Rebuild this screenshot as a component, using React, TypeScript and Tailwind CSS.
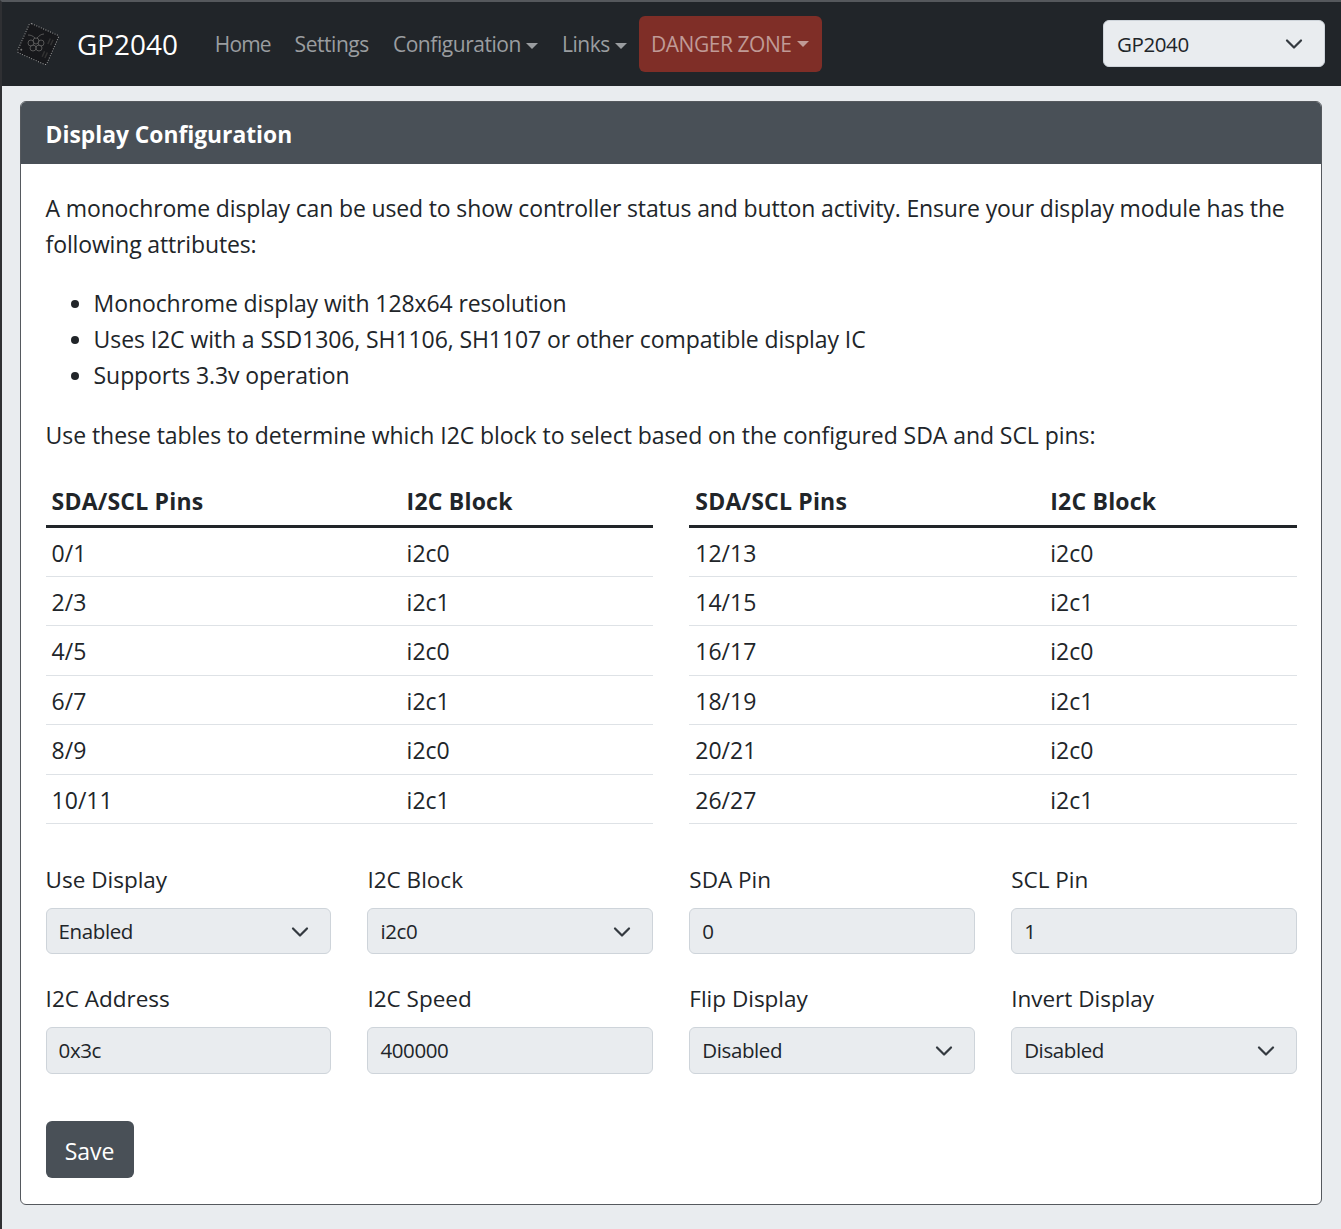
import React from 'react';
import { ChevronDown } from 'lucide-react';

const leftPins = [
  ['0/1', 'i2c0'],
  ['2/3', 'i2c1'],
  ['4/5', 'i2c0'],
  ['6/7', 'i2c1'],
  ['8/9', 'i2c0'],
  ['10/11', 'i2c1'],
];

const rightPins = [
  ['12/13', 'i2c0'],
  ['14/15', 'i2c1'],
  ['16/17', 'i2c0'],
  ['18/19', 'i2c1'],
  ['20/21', 'i2c0'],
  ['26/27', 'i2c1'],
];

const Logo = () => (
  <svg viewBox="0 0 48 48" className="h-[48px] w-[48px] shrink-0">
    <g transform="rotate(24 24 24)">
      <rect x="8" y="8" width="32" height="32" rx="2" fill="#17181b" stroke="#9a9a9a" strokeWidth="1" strokeDasharray="1 1.5" />
      <circle cx="11" cy="36" r="1" fill="#777" />
    </g>
    <g fill="none" stroke="#565656" strokeWidth="1">
      <circle cx="22" cy="21" r="3" />
      <circle cx="17" cy="23" r="3" />
      <circle cx="27" cy="23" r="3" />
      <circle cx="19" cy="28" r="3" />
      <circle cx="25" cy="28" r="3" />
      <path d="M14 15c3 0 5 1 7 3M30 14c-3 0-5 2-7 4" />
    </g>
    <g transform="rotate(24 24 24)" stroke="#333" strokeWidth="1.5">
      <path d="M33 14v6M36 14v6M33 28v6M36 28v6" />
    </g>
  </svg>
);

const Caret = () => (
  <span className="ml-[5px] inline-block h-0 w-0 border-x-[6.5px] border-t-[6.5px] border-x-transparent border-t-current align-middle" />
);

const PinTable = ({ rows }: { rows: string[][] }) => (
  <table className="w-full table-fixed border-collapse">
    <thead>
      <tr className="h-[46px] border-b-[3px] border-[#212529] text-left tracking-[0.2px]">
        <th className="w-[355px] px-[6px] pb-[4px] font-bold">SDA/SCL Pins</th>
        <th className="px-[6px] pb-[4px] font-bold">I2C Block</th>
      </tr>
    </thead>
    <tbody>
      {rows.map((row) => (
        <tr key={row[0]} className="h-[49.5px] border-b border-[#dee2e6]">
          <td className="px-[6px] pt-[2px]">{row[0]}</td>
          <td className="px-[6px] pt-[2px]">{row[1]}</td>
        </tr>
      ))}
    </tbody>
  </table>
);

const SelectField = ({ label, value }: { label: string; value: string }) => (
  <div>
    <label className="mb-[10px] block text-[22.5px] leading-[36px]">{label}</label>
    <div className="relative">
      <select
        defaultValue={value}
        className="h-[46.5px] w-full appearance-none rounded-[6px] border border-[#ced4da] bg-[#e9ecef] px-[12px] text-[20.5px] tracking-[-0.4px] text-[#212529]"
      >
        <option>{value}</option>
      </select>
      <ChevronDown size={28} strokeWidth={1.9} className="pointer-events-none absolute right-[17px] top-[10px] text-[#343a40]" />
    </div>
  </div>
);

const InputField = ({ label, value }: { label: string; value: string }) => (
  <div>
    <label className="mb-[10px] block text-[22.5px] leading-[36px]">{label}</label>
    <input
      readOnly
      value={value}
      className="h-[46.5px] w-full rounded-[6px] border border-[#ced4da] bg-[#e9ecef] px-[12px] text-[20.5px] tracking-[-0.4px] text-[#212529]"
    />
  </div>
);

export default function App() {
  return (
    <div className="min-h-[1229px] border-t-2 border-l-2 border-t-[#55585c] border-l-[#2f3033] bg-[#e9ecef] font-['Open_Sans',sans-serif] text-[23px] leading-[36px] text-[#212529]">
      <nav className="flex h-[84px] items-center bg-[#212529] pl-[12px] pr-[16px]">
        <Logo />
        <span className="ml-[15px] text-[27.9px] text-white">GP2040</span>
        <div className="ml-[25px] flex items-center text-[21px] tracking-[-0.45px] text-[#9a9da0]">
          <a className="px-[12px] tracking-[-0.9px]">Home</a>
          <a className="px-[12px]">Settings</a>
          <a className="px-[12px]">
            Configuration
            <Caret />
          </a>
          <a className="px-[12px]">
            Links
            <Caret />
          </a>
          <a className="flex h-[56px] items-center rounded-[6px] bg-[#7f2e27] pl-[12px] pr-[13px] text-[#c09a96]">
            DANGER ZONE
            <Caret />
          </a>
        </div>
        <div className="relative mb-[1px] ml-auto w-[222px]">
          <select
            defaultValue="GP2040"
            className="h-[47px] w-full appearance-none rounded-[6px] border border-[#ced4da] bg-[#e9ecef] px-[13px] text-[20.5px] tracking-[-0.4px] text-[#212529]"
          >
            <option>GP2040</option>
          </select>
          <ChevronDown size={28} strokeWidth={1.9} className="pointer-events-none absolute right-[17px] top-[10px] text-[#343a40]" />
        </div>
      </nav>

      <main className="pl-[18px] pr-[19px] pt-[15px] pb-[25px]">
        <section className="overflow-hidden rounded-[6px] border border-[#55595e] bg-white">
          <h1 className="flex h-[62px] items-center bg-[#495057] pl-[24.6px] pr-[24px] pt-[4px] text-[22.8px] font-bold text-white">Display Configuration</h1>
          <div className="pl-[24.6px] pr-[24px] pt-[26px] pb-[26px]">
            <p className="tracking-[-0.145px]">
              A monochrome display can be used to show controller status and button activity. Ensure your display module has the following attributes:
            </p>
            <ul className="mt-[23px] list-disc pl-[48px] tracking-[-0.09px]">
              <li>Monochrome display with 128x64 resolution</li>
              <li>Uses I2C with a SSD1306, SH1106, SH1107 or other compatible display IC</li>
              <li>Supports 3.3v operation</li>
            </ul>
            <p className="mt-[24px] tracking-[-0.06px]">Use these tables to determine which I2C block to select based on the configured SDA and SCL pins:</p>

            <div className="mt-[27.5px] grid grid-cols-2 gap-x-[36px]">
              <PinTable rows={leftPins} />
              <PinTable rows={rightPins} />
            </div>

            <div className="mt-[37.5px] grid grid-cols-4 gap-x-[36px] gap-y-[27px]">
              <SelectField label="Use Display" value="Enabled" />
              <SelectField label="I2C Block" value="i2c0" />
              <InputField label="SDA Pin" value="0" />
              <InputField label="SCL Pin" value="1" />
              <InputField label="I2C Address" value="0x3c" />
              <InputField label="I2C Speed" value="400000" />
              <SelectField label="Flip Display" value="Disabled" />
              <SelectField label="Invert Display" value="Disabled" />
            </div>

            <button className="mt-[47px] h-[57px] w-[88px] rounded-[6px] bg-[#495057] pt-[3px] text-white">Save</button>
          </div>
        </section>
      </main>
    </div>
  );
}
